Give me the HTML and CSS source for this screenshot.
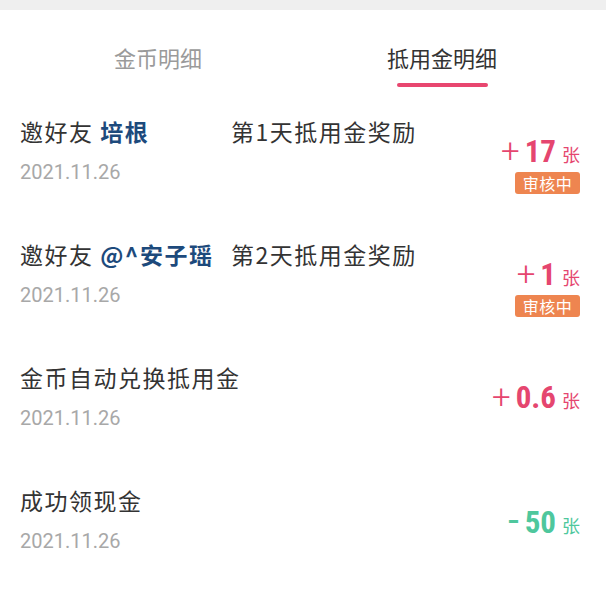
FILE: index.html
```html
<!DOCTYPE html>
<html lang="zh-CN">

<head>
  <meta charset="UTF-8">
  <meta name="viewport" content="width=device-width, initial-scale=1.0">
  <title>抵用金明细</title>
  <link rel="stylesheet" href="styles.css">
</head>

<body>
  <div class="topbar"></div>

  <div class="tabs">
    <div class="tab">金币明细</div>
    <div class="tab active">抵用金明细</div>
  </div>

  <ul class="records">
    <li class="record">
      <div class="info">
        <div class="title"><span class="who">邀好友 <b>培根</b></span><span>第1天抵用金奖励</span></div>
        <div class="date">2021.11.26</div>
      </div>
      <div class="side">
        <div class="amount plus"><span class="sign">+</span><span class="num">17</span><span class="unit">张</span></div>
        <div class="badge">审核中</div>
      </div>
    </li>
    <li class="record">
      <div class="info">
        <div class="title"><span class="who">邀好友 <b>@^安子瑶</b></span><span>第2天抵用金奖励</span></div>
        <div class="date">2021.11.26</div>
      </div>
      <div class="side">
        <div class="amount plus"><span class="sign">+</span><span class="num">1</span><span class="unit">张</span></div>
        <div class="badge">审核中</div>
      </div>
    </li>
    <li class="record">
      <div class="info">
        <div class="title">金币自动兑换抵用金</div>
        <div class="date">2021.11.26</div>
      </div>
      <div class="side">
        <div class="amount plus"><span class="sign">+</span><span class="num">0.6</span><span class="unit">张</span></div>
      </div>
    </li>
    <li class="record">
      <div class="info">
        <div class="title">成功领现金</div>
        <div class="date">2021.11.26</div>
      </div>
      <div class="side">
        <div class="amount minus"><span class="sign">-</span><span class="num">50</span><span class="unit">张</span></div>
      </div>
    </li>
    <li class="record">
      <div class="info">
        <div class="title">邀好友 <b>微信用户</b></div>
        <div class="date">2021.11.26</div>
      </div>
    </li>
  </ul>
</body>

</html>
```

FILE: styles.css
```css
body {
  margin: 0;
  padding: 0;
  background-color: #fff;
  color: #333;
  font-family: "Noto Sans CJK SC", "Noto Sans", sans-serif;
  overflow: hidden;
}

.topbar {
  height: 10px;
  background-color: #efefef;
}

/* tab header */
.tabs {
  display: grid;
  grid-template-columns: 284px 284px;
  padding: 32px 22px 0 16px;
}

.tab {
  display: flex;
  flex-direction: column;
  align-items: center;
  font-size: 22px;
  line-height: 30px;
  color: #9a9a9a;
}

.tab.active {
  color: #333;
}

.tab.active::after {
  content: "";
  width: 91px;
  height: 4px;
  margin-top: 11px;
  border-radius: 2px;
  background-color: #e8466f;
}

/* list */
.records {
  list-style: none;
  margin: 13px 0 0;
  padding: 0;
}

.record {
  display: flex;
  align-items: flex-start;
  justify-content: space-between;
  height: 123px;
  box-sizing: border-box;
  padding: 15px 26px 0 20px;
}

.title {
  display: flex;
  font-size: 23px;
  line-height: 32px;
  letter-spacing: 1.5px;
  color: #333;
}

.title .who {
  width: 211px;
}

.title b {
  color: #1d4a7c;
  font-weight: 700;
}

.date {
  margin-top: 12px;
  font-family: Roboto, "Noto Sans", sans-serif;
  font-size: 20px;
  line-height: 26px;
  color: #a8a8a8;
}

.side {
  display: flex;
  flex-direction: column;
  align-items: flex-end;
  margin-top: 19px;
}

.amount {
  display: flex;
  align-items: baseline;
  height: 34px;
  line-height: 34px;
}

.amount.plus {
  color: #e5466f;
}

.amount.minus {
  color: #4ec79d;
}

.sign {
  font-family: Roboto, sans-serif;
  font-size: 33px;
  font-weight: 300;
  margin-right: 5px;
}

.minus .sign {
  font-size: 38px;
  font-weight: 400;
  margin-right: 6px;
}

.num {
  font-family: "Roboto Condensed", Roboto, sans-serif;
  font-size: 31px;
  font-weight: 700;
}

.unit {
  font-size: 18px;
  margin-left: 6px;
}

.badge {
  margin-top: 4px;
  width: 65px;
  height: 22px;
  line-height: 22px;
  border-radius: 3px;
  background-color: #ee8550;
  color: #fff;
  font-size: 16px;
  letter-spacing: 0.5px;
  text-align: center;
}
```
